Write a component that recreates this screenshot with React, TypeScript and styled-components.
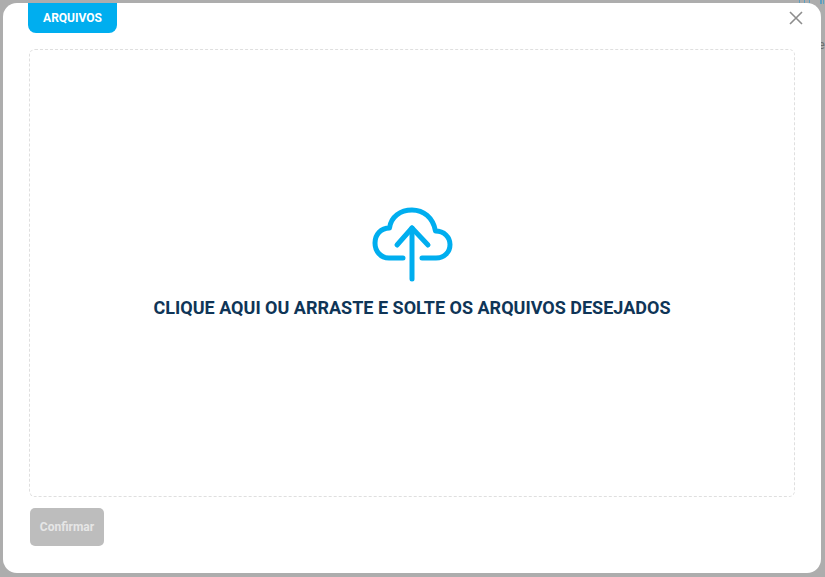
import React from "react";
import styled, { createGlobalStyle } from "styled-components";

const GlobalStyle = createGlobalStyle`
  html, body {
    margin: 0;
    padding: 0;
    height: 100%;
    overflow: hidden;
    font-family: Roboto, "Liberation Sans", sans-serif;
  }
  #root {
    height: 100%;
  }
`;

const Backdrop = styled.div`
  position: relative;
  overflow: hidden;
  box-sizing: border-box;
  height: 100vh;
  padding: 3px 4px 4px 3px;
  background: #adadad;
  display: flex;
`;

// bits of the page behind the overlay, only visible at the top right
const PeekBars = styled.svg`
  position: absolute;
  top: 0;
  right: 0;
`;

const PeekLetter = styled.span`
  position: absolute;
  top: 37px;
  right: 0;
  color: #6f6f6f;
  font-size: 13px;
  line-height: 15px;
`;

const Modal = styled.div`
  position: relative;
  flex: 1;
  display: flex;
  flex-direction: column;
  background: #fff;
  border-radius: 14px;
  padding: 0 26px 27px 25px;
`;

const Tab = styled.div`
  align-self: flex-start;
  width: 89px;
  height: 30px;
  display: flex;
  align-items: center;
  justify-content: center;
  background: #00aeef;
  color: #fff;
  font-size: 12px;
  font-weight: 700;
  border-radius: 0 0 8px 8px;
`;

const CloseButton = styled.button`
  position: absolute;
  top: 7px;
  right: 17px;
  width: 16px;
  height: 16px;
  padding: 0;
  border: 0;
  background: none;
  display: flex;
  color: #8d8d8d;
`;

const DropZone = styled.div`
  flex: 1;
  margin: 16px 0 11px 1px;
  border: 1px dashed #dfdfdf;
  border-radius: 6px;
  display: flex;
  flex-direction: column;
  align-items: center;
  justify-content: center;
  gap: 12px;
  padding-bottom: 22px;
`;

const DropText = styled.div`
  color: #0f3557;
  font-size: 18px;
  font-weight: 700;
  line-height: 22px;
`;

const ConfirmButton = styled.button`
  align-self: flex-start;
  margin-left: 2px;
  width: 74px;
  height: 38px;
  padding: 0;
  border: 0;
  border-radius: 5px;
  background: #bdbdbd;
  color: #e6e6e6;
  font-family: inherit;
  font-size: 12px;
  font-weight: 700;
`;

const CloudIcon = () => (
  <svg width="85" height="80" viewBox="10 10 85 80" fill="none" stroke="#00aeef" strokeWidth="5" strokeLinecap="round" strokeLinejoin="round">
    <path d="M43 63H29C20.5 63 15 56 15 48C15 39.5 21 33 29.5 33C31 21.5 40.5 15 52 15C63.5 15 73 22.5 75.5 36C84 36 90 42 90 49.5C90 57 84.5 63 76 63H62" />
    <path d="M52 84V33" />
    <path d="M37 50L52 33L68 50" />
  </svg>
);

export default function App() {
  return (
    <>
      <GlobalStyle />
      <Backdrop>
        <PeekBars width="28" height="4" viewBox="0 0 28 4" fill="#5f9fc0">
          <rect x="2" width="1" height="3" />
          <rect x="7" width="1" height="3" />
          <rect x="12" width="1" height="3" />
          <rect x="23" width="2" height="4" />
          <rect x="26" width="1" height="4" />
        </PeekBars>
        <PeekLetter>e</PeekLetter>
        <Modal>
          <Tab>ARQUIVOS</Tab>
          <CloseButton aria-label="Fechar">
            <svg width="16" height="16" viewBox="0 0 16 16" stroke="currentColor" strokeWidth="1.6">
              <path d="M2 2L14 14M14 2L2 14" />
            </svg>
          </CloseButton>
          <DropZone>
            <CloudIcon />
            <DropText>CLIQUE AQUI OU ARRASTE E SOLTE OS ARQUIVOS DESEJADOS</DropText>
          </DropZone>
          <ConfirmButton disabled>Confirmar</ConfirmButton>
        </Modal>
      </Backdrop>
    </>
  );
}
